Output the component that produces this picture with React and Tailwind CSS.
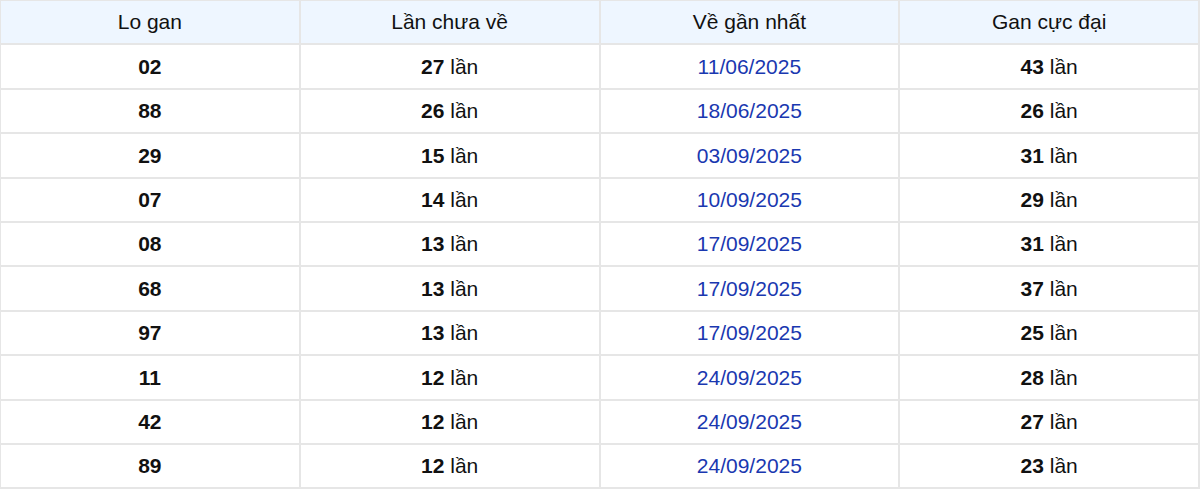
import React from 'react'

const rows = [
  ['02', 27, '11/06/2025', 43],
  ['88', 26, '18/06/2025', 26],
  ['29', 15, '03/09/2025', 31],
  ['07', 14, '10/09/2025', 29],
  ['08', 13, '17/09/2025', 31],
  ['68', 13, '17/09/2025', 37],
  ['97', 13, '17/09/2025', 25],
  ['11', 12, '24/09/2025', 28],
  ['42', 12, '24/09/2025', 27],
  ['89', 12, '24/09/2025', 23],
]

const headers = ['Lo gan', 'Lần chưa về', 'Về gần nhất', 'Gan cực đại']

export default function App() {
  return (
    <div
      className="w-[1200px] h-[489px] overflow-hidden bg-white"
      style={{ fontFamily: '"Liberation Sans", Arial, sans-serif' }}
    >
      <table className="w-[1201px] -ml-px -mt-px table-fixed border-collapse text-[21px] text-[#111]">
        <thead>
          <tr className="bg-[#eef6ff]">
            {headers.map((h) => (
              <th
                key={h}
                className="h-[44.4px] border-2 border-[#e6e6e6] font-normal text-center align-middle p-0"
              >
                {h}
              </th>
            ))}
          </tr>
        </thead>
        <tbody>
          {rows.map((r, i) => (
            <tr key={i}>
              <td className="h-[44.4px] border-2 border-[#e6e6e6] text-center align-middle font-bold p-0">
                {r[0]}
              </td>
              <td className="h-[44.4px] border-2 border-[#e6e6e6] text-center align-middle p-0">
                <b>{r[1]}</b> lần
              </td>
              <td className="h-[44.4px] border-2 border-[#e6e6e6] text-center align-middle p-0 text-[#1a38b0]">
                {r[2]}
              </td>
              <td className="h-[44.4px] border-2 border-[#e6e6e6] text-center align-middle p-0">
                <b>{r[3]}</b> lần
              </td>
            </tr>
          ))}
        </tbody>
      </table>
    </div>
  )
}
